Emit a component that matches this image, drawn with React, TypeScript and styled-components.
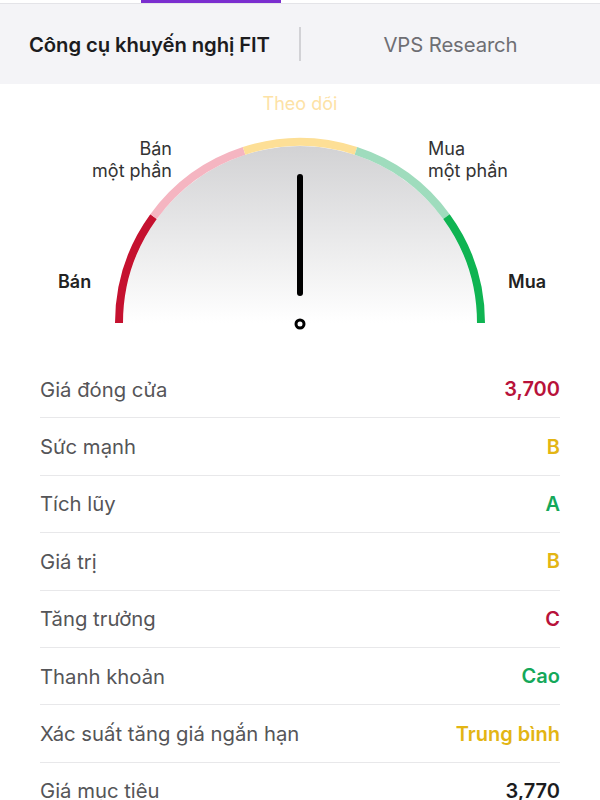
import React from "react";
import styled, { createGlobalStyle } from "styled-components";

const Global = createGlobalStyle`
  html, body { margin: 0; padding: 0; background: #ffffff; }
  body { font-family: Inter, "Noto Sans", "Liberation Sans", sans-serif; width: 600px; height: 800px; overflow: hidden; }
`;

const Page = styled.div`
  width: 600px;
  height: 800px;
  display: flex;
  flex-direction: column;
  background: #ffffff;
  overflow: hidden;
  & > * { flex-shrink: 0; }
`;

const TopStrip = styled.div`
  height: 3px;
  border-bottom: 1px solid #e4e4e8;
  background: #ffffff;
  display: flex;
`;

const ActiveTab = styled.div`
  margin-left: 141px;
  width: 140px;
  height: 3px;
  background: #7b2ecf;
`;

const Header = styled.div`
  height: 80px;
  background: #f4f4f7;
  display: flex;
  align-items: center;
`;

const HeaderItem = styled.div<{ $active?: boolean }>`
  box-sizing: border-box;
  flex: 0 0 299px;
  display: flex;
  justify-content: ${(p) => (p.$active ? "flex-start" : "center")};
  padding-left: ${(p) => (p.$active ? "29px" : "0")};
  font-size: 20.3px;
  font-weight: ${(p) => (p.$active ? 600 : 400)};
  color: ${(p) => (p.$active ? "#1c1c1e" : "#6e6e73")};
  letter-spacing: -0.1px;
`;

const Divider = styled.div`
  width: 2px;
  height: 34px;
  background: #d2d2d6;
`;

const GaugeWrap = styled.div`
  height: 277px;
  display: flex;
  justify-content: center;
`;

const List = styled.div`
  padding: 0 40px;
  display: flex;
  flex-direction: column;
`;

const Row = styled.div`
  box-sizing: border-box;
  height: 57.4px;
  flex-shrink: 0;
  display: flex;
  align-items: center;
  justify-content: space-between;
  border-bottom: 1px solid #e8e8ea;
  font-size: 20.3px;
`;

const Label = styled.span`
  color: #555558;
`;

const Value = styled.span<{ $color: string }>`
  color: ${(p) => p.$color};
  font-weight: 600;
  font-size: 20px;
`;

const RED = "#b8123a";
const YELLOW = "#e3b514";
const GREEN = "#14a85a";

const rows: { label: string; value: string; color: string }[] = [
  { label: "Giá đóng cửa", value: "3,700", color: RED },
  { label: "Sức mạnh", value: "B", color: YELLOW },
  { label: "Tích lũy", value: "A", color: GREEN },
  { label: "Giá trị", value: "B", color: YELLOW },
  { label: "Tăng trưởng", value: "C", color: RED },
  { label: "Thanh khoản", value: "Cao", color: GREEN },
  { label: "Xác suất tăng giá ngắn hạn", value: "Trung bình", color: YELLOW },
  { label: "Giá mục tiêu", value: "3,770", color: "#1c1c1e" },
];

const CX = 300;
const CY = 323;
const R = 181;

function pt(deg: number, r: number) {
  const t = (deg * Math.PI) / 180;
  return [CX - r * Math.cos(t), CY - r * Math.sin(t)];
}

function arc(a1: number, a2: number, r: number) {
  const [x1, y1] = pt(a1, r);
  const [x2, y2] = pt(a2, r);
  return `M ${x1} ${y1} A ${r} ${r} 0 0 1 ${x2} ${y2}`;
}

const segments = ["#c5112f", "#f5b5c1", "#fddf96", "#9fdcbd", "#0fb452"];

const Gauge = () => (
  <svg width="600" height="277" viewBox="0 84 600 277">
    <defs>
      <linearGradient id="fillG" x1="0" y1="0" x2="0" y2="1">
        <stop offset="0" stopColor="#d2d2d4" />
        <stop offset="1" stopColor="#ffffff" />
      </linearGradient>
    </defs>
    <path d={`M ${CX - 177} ${CY} A 177 177 0 0 1 ${CX + 177} ${CY} Z`} fill="url(#fillG)" />
    {segments.map((c, i) => (
      <path key={i} d={arc(i * 36, (i + 1) * 36, R)} stroke={c} strokeWidth="8" fill="none" />
    ))}
    <line x1="300" y1="177" x2="300" y2="293" stroke="#000" strokeWidth="6" strokeLinecap="round" />
    <circle cx="300" cy="324" r="4" fill="#fff" stroke="#000" strokeWidth="3" />
    <g fontFamily="Inter, 'Noto Sans', sans-serif" fontSize="18">
      <text x="300" y="110" textAnchor="middle" fill="#fde2a6">Theo dõi</text>
      <text x="172" y="155" textAnchor="end" fill="#333">Bán</text>
      <text x="172" y="177" textAnchor="end" fill="#333">một phần</text>
      <text x="428" y="155" textAnchor="start" fill="#333">Mua</text>
      <text x="428" y="177" textAnchor="start" fill="#333">một phần</text>
      <text x="58" y="288" textAnchor="start" fill="#222" fontWeight="600">Bán</text>
      <text x="546" y="288" textAnchor="end" fill="#222" fontWeight="600">Mua</text>
    </g>
  </svg>
);

export default function App() {
  return (
    <Page>
      <Global />
      <TopStrip>
        <ActiveTab />
      </TopStrip>
      <Header>
        <HeaderItem $active>Công cụ khuyến nghị FIT</HeaderItem>
        <Divider />
        <HeaderItem>VPS Research</HeaderItem>
      </Header>
      <GaugeWrap>
        <Gauge />
      </GaugeWrap>
      <List>
        {rows.map((r) => (
          <Row key={r.label}>
            <Label>{r.label}</Label>
            <Value $color={r.color}>{r.value}</Value>
          </Row>
        ))}
      </List>
    </Page>
  );
}
